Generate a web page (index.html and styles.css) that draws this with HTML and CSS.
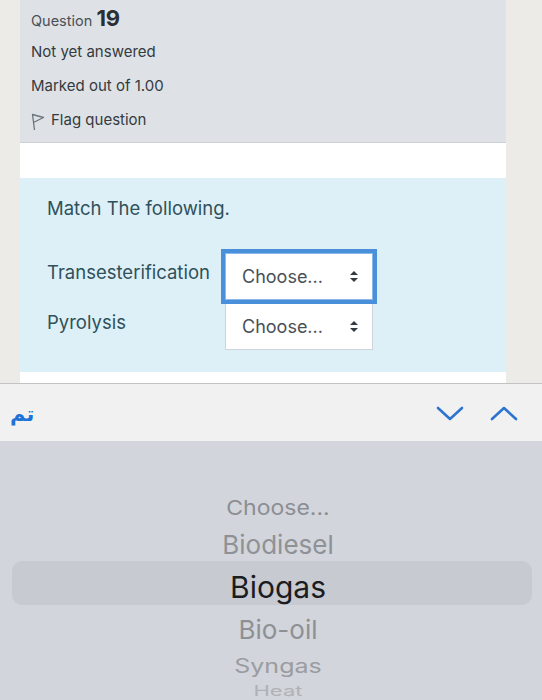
FILE: index.html
```html
<!doctype html>
<html lang="en">
  <head>
    <meta charset="utf-8">
    <title>Question 19</title>
    <link rel="stylesheet" href="styles.css">
  </head>
  <body>
    <div class="card">
      <div class="info">
        <div class="info-row">Question <span class="qno">19</span></div>
        <div class="info-row">Not yet answered</div>
        <div class="info-row">Marked out of 1.00</div>
        <div class="info-row flag">
          <svg class="flag-icon" width="14" height="18" viewBox="0 0 14 18">
            <path d="M3.5 17 L1.5 1.5 L12.5 4.5 L2.4 9.5" fill="none" stroke="#6c757d" stroke-width="1.3" stroke-linejoin="round"/>
          </svg>
          Flag question
        </div>
      </div>
      <div class="spacer"></div>
      <div class="formulation">
        <p class="qtext">Match The following.</p>
        <div class="match-row">
          <span class="match-label">Transesterification</span>
          <div class="choose focused">Choose... <span class="updown"></span></div>
        </div>
        <div class="match-row">
          <span class="match-label">Pyrolysis</span>
          <div class="choose">Choose... <span class="updown"></span></div>
        </div>
      </div>
      <div class="card-foot"></div>
    </div>

    <div class="toolbar">
      <span class="done" dir="rtl">تم</span>
      <div class="nav">
        <svg width="28" height="15" viewBox="0 0 28 15">
          <polyline points="2,2 14,13 26,2" fill="none" stroke="#2c74cf" stroke-width="2.6" stroke-linecap="round" stroke-linejoin="round"/>
        </svg>
        <svg width="28" height="15" viewBox="0 0 28 15">
          <polyline points="2,13 14,2 26,13" fill="none" stroke="#2c74cf" stroke-width="2.6" stroke-linecap="round" stroke-linejoin="round"/>
        </svg>
      </div>
    </div>

    <div class="picker">
      <div class="wheel-item w-up2">Choose...</div>
      <div class="wheel-item w-up1">Biodiesel</div>
      <div class="wheel-item w-sel">Biogas</div>
      <div class="wheel-item w-dn1">Bio-oil</div>
      <div class="wheel-item w-dn2">Syngas</div>
      <div class="wheel-item w-dn3">Heat</div>
      <div class="wheel-item w-dn4">Bioethanol</div>
    </div>
  </body>
</html>
```

FILE: styles.css
```css
body {
    margin: 0;
    width: 542px;
    height: 700px;
    overflow: hidden;
    background-color: #ecebe8;
    font-family: Inter, "Noto Sans", sans-serif;
}

.card {
    margin: 0 36px 0 20px;
    background-color: #fff;
}

.info {
    background-color: #dee2e6;
    border-bottom: 1px solid #cdd1d5;
    padding: 1px 11px 5px;
    color: #343a40;
    font-size: 15px;
}

.info-row {
    line-height: 34px;
    height: 34px;
}

.info-row:first-child {
    font-size: 14.5px;
    color: #4a4f55;
}

.qno {
    font-size: 22px;
    font-weight: 700;
    color: #2b2f33;
}

.flag {
    display: flex;
    align-items: center;
    gap: 6px;
}

.flag-icon {
    margin-top: 4px;
}

.spacer {
    height: 35px;
}

.formulation {
    background-color: #ddf0f7;
    height: 194px;
    padding: 18px 0 0 27px;
    box-sizing: border-box;
    color: #30505a;
}

.qtext {
    margin: 0 0 33px;
    font-size: 18.5px;
    line-height: 24px;
}

.match-row {
    display: flex;
    align-items: flex-start;
    height: 50px;
}

.match-label {
    width: 178px;
    padding-top: 7px;
    font-size: 18.5px;
    line-height: 24px;
    flex-shrink: 0;
}

.choose {
    width: 148px;
    height: 47px;
    box-sizing: border-box;
    border: 1px solid #ced4da;
    background-color: #fff;
    padding: 0 14px 0 16px;
    display: flex;
    align-items: center;
    justify-content: space-between;
    font-size: 18px;
    color: #495057;
}

.choose.focused {
    box-shadow: 0 0 0 4px #4a8fd9;
    border-color: #8bb8ea;
    position: relative;
    z-index: 1;
}

.updown {
    width: 8px;
    height: 11px;
    position: relative;
}

.updown::before,
.updown::after {
    content: "";
    position: absolute;
    left: 0;
    border-left: 4px solid transparent;
    border-right: 4px solid transparent;
}

.updown::before {
    top: 0;
    border-bottom: 4.5px solid #343a40;
}

.updown::after {
    bottom: 0;
    border-top: 4.5px solid #343a40;
}

.card-foot {
    height: 11px;
}

.toolbar {
    height: 57px;
    border-top: 1px solid #c3c3c5;
    background-color: #f1f1f2;
    display: flex;
    align-items: center;
    justify-content: space-between;
    padding: 0 24px 0 10px;
}

.done {
    font-family: "DejaVu Sans", sans-serif;
    font-size: 21px;
    font-weight: 700;
    color: #1f73d6;
    margin-top: 2px;
}

.nav {
    display: flex;
    gap: 26px;
    margin-top: 2px;
}

.picker {
    height: 259px;
    background-color: #d2d5db;
    padding: 46px 10px 0 12px;
    box-sizing: border-box;
    overflow: hidden;
}

.wheel-item {
    text-align: center;
    padding-left: 12px;
    white-space: nowrap;
}

.w-up2 {
    height: 36px;
    line-height: 42px;
    font-size: 23px;
    color: #8c8e93;
    transform: scaleY(0.9);
}

.w-up1 {
    height: 38px;
    line-height: 44px;
    font-size: 26px;
    color: #8f9196;
}

.w-sel {
    height: 44px;
    line-height: 53px;
    font-size: 30px;
    color: #1c1c1e;
    background-color: #c7cad1;
    border-radius: 10px;
}

.w-dn1 {
    height: 40px;
    line-height: 50px;
    font-size: 26px;
    color: #8e9095;
}

.w-dn2 {
    height: 33px;
    line-height: 44px;
    font-size: 25px;
    color: #9a9ca1;
    transform: scaleY(0.78);
}

.w-dn3 {
    height: 22px;
    line-height: 28px;
    font-size: 22px;
    color: #afb1b6;
    transform: scaleY(0.66);
}

.w-dn4 {
    height: 16px;
    line-height: 16px;
    font-size: 22px;
    color: #c2c4c9;
    transform: scaleY(0.45);
}
```
